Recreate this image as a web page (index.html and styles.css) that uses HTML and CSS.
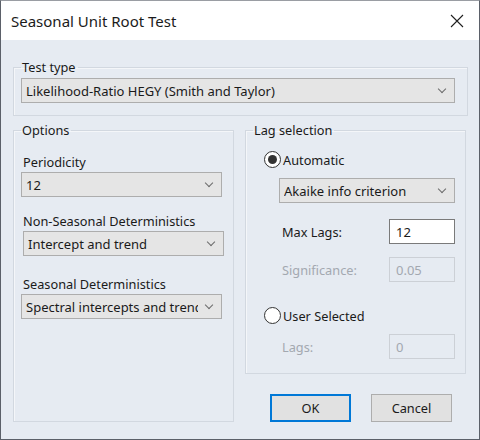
FILE: index.html
```html
<!DOCTYPE html>
<html lang="en">
<head>
<meta charset="utf-8">
<title>Seasonal Unit Root Test</title>
<link rel="stylesheet" href="styles.css">
</head>
<body>
<div class="window">
  <div class="titlebar">
    <span class="title">Seasonal Unit Root Test</span>
    <svg class="close" width="14" height="14" viewBox="0 0 14 14"><path d="M1 1 L13 13 M13 1 L1 13" stroke="#1f1f1f" stroke-width="1.1" fill="none"/></svg>
  </div>
  <div class="content">
    <fieldset class="group group-test">
      <legend>Test type</legend>
      <div class="combo combo-wide"><span class="combo-text">Likelihood-Ratio HEGY (Smith and Taylor)</span><span class="chev"></span></div>
    </fieldset>
    <div class="columns">
      <fieldset class="group group-options">
        <legend>Options</legend>
        <div class="field field-first">
          <div class="label">Periodicity</div>
          <div class="combo combo-opt"><span class="combo-text">12</span><span class="chev"></span></div>
        </div>
        <div class="field field-second">
          <div class="label">Non-Seasonal Deterministics</div>
          <div class="combo combo-opt combo-shift"><span class="combo-text">Intercept and trend</span><span class="chev"></span></div>
        </div>
        <div class="field field-third">
          <div class="label">Seasonal Deterministics</div>
          <div class="combo combo-opt"><span class="combo-text">Spectral intercepts and trend</span><span class="chev"></span></div>
        </div>
      </fieldset>
      <div class="rightcol">
        <fieldset class="group group-lag">
          <legend>Lag selection</legend>
          <div class="radio-row radio-auto"><span class="radio checked"></span><span class="radio-label">Automatic</span></div>
          <div class="combo combo-lag"><span class="combo-text">Akaike info criterion</span><span class="chev"></span></div>
          <div class="input-row row-max"><span class="in-label">Max Lags:</span><span class="textbox">12</span></div>
          <div class="input-row row-sig disabled"><span class="in-label">Significance:</span><span class="textbox">0.05</span></div>
          <div class="radio-row radio-user"><span class="radio"></span><span class="radio-label">User Selected</span></div>
          <div class="input-row row-lags disabled"><span class="in-label">Lags:</span><span class="textbox">0</span></div>
        </fieldset>
        <div class="buttons">
          <button class="btn btn-default">OK</button>
          <button class="btn">Cancel</button>
        </div>
      </div>
    </div>
  </div>
</div>
</body>
</html>
```
FILE: styles.css
```css
* { box-sizing: border-box; }
html, body { margin: 0; padding: 0; background: #ffffff; }
body { font-family: "Noto Sans", "Liberation Sans", sans-serif; font-size: 13px; color: #1a1a1a; }

.window {
  width: 480px;
  height: 440px;
  display: flex;
  flex-direction: column;
  border: 1px solid #5b6069;
  border-top-color: #9a9da3;
}

.titlebar {
  height: 39px;
  background: #ffffff;
  display: flex;
  align-items: center;
  justify-content: space-between;
  padding: 0 15px 0 10px;
}
.title { font-size: 15px; color: #1b1b1b; }
.close { display: block; }

.content {
  flex: 1;
  background: #e6ebf2;
  padding: 19px 11px 17px 12px;
  display: flex;
  flex-direction: column;
}

.group {
  margin: 0;
  border: 1px solid #d2d8e0;
  box-shadow: inset 1px 1px 0 #f4f6f9;
  min-width: 0;
}
.group legend {
  padding: 0 2px 0 1px;
  line-height: 16px;
  font-size: 12.75px;
  color: #1a1a1a;
}
.group-test { padding: 3px 12px 12px 7px; }

.columns {
  flex: 1;
  margin-top: 6px;
  display: grid;
  grid-template-columns: 221px 221px;
  column-gap: 11px;
}
.group-options { padding: 0 10px 0 7px; }
.rightcol { display: flex; flex-direction: column; }
.group-lag { padding: 0 10px 14px 7px; }

.combo {
  height: 25px;
  background: #e5e5e5;
  border: 1px solid #adadad;
  display: flex;
  align-items: center;
  justify-content: space-between;
  padding: 0 9px 0 4px;
  overflow: hidden;
  font-size: 13px;
}
.combo-text { white-space: nowrap; overflow: hidden; flex: 1; min-width: 0; margin-right: 8px; }
.chev {
  flex: none;
  width: 6px;
  height: 6px;
  margin-top: -3px;
  border-right: 1px solid #6b6b6b;
  border-bottom: 1px solid #6b6b6b;
  transform: rotate(45deg);
}
.combo-opt { width: 201px; }
.combo-shift { margin-left: 2px; }

.label { line-height: 16px; margin-bottom: 2px; margin-left: 2px; font-size: 12.75px; }
.field-first { margin-top: 16px; }
.field-second { margin-top: 16px; }
.field-third { margin-top: 20px; }

.radio-row { display: flex; align-items: center; height: 17px; margin-left: 11px; }
.radio-auto { margin-top: 13px; }
.radio-user { margin-top: 25px; }
.radio {
  width: 17px;
  height: 17px;
  border: 1px solid #333333;
  border-radius: 50%;
  background: #ffffff;
  display: flex;
  align-items: center;
  justify-content: center;
}
.radio.checked::after {
  content: "";
  width: 9px;
  height: 9px;
  border-radius: 50%;
  background: #333333;
}
.radio-label { margin-left: 2px; line-height: 16px; font-size: 12.75px; }

.combo-lag { margin-top: 10px; margin-left: 26px; }

.input-row { display: flex; align-items: center; justify-content: space-between; height: 25px; margin-left: 29px; font-size: 12.75px; }
.row-max { margin-top: 16px; }
.row-sig { margin-top: 13px; }
.row-lags { margin-top: 10px; }
.textbox {
  width: 66px;
  height: 25px;
  border: 1px solid #7a7a7a;
  background: #ffffff;
  display: flex;
  align-items: center;
  padding-left: 6px;
  font-size: 13px;
}
.disabled .in-label { color: #a3a8b0; }
.disabled .textbox { border-color: #ccd0d6; background: #e6ebf2; color: #a3a8b0; }

.buttons {
  margin-top: auto;
  display: flex;
  justify-content: flex-end;
  gap: 20px;
  padding-right: 14px;
}
.btn {
  width: 81px;
  height: 28px;
  font-family: inherit;
  font-size: 12.75px;
  color: #1a1a1a;
  background: #e1e1e1;
  border: 1px solid #adadad;
  padding: 0;
}
.btn-default { border: 2px solid #0078d7; }
```
